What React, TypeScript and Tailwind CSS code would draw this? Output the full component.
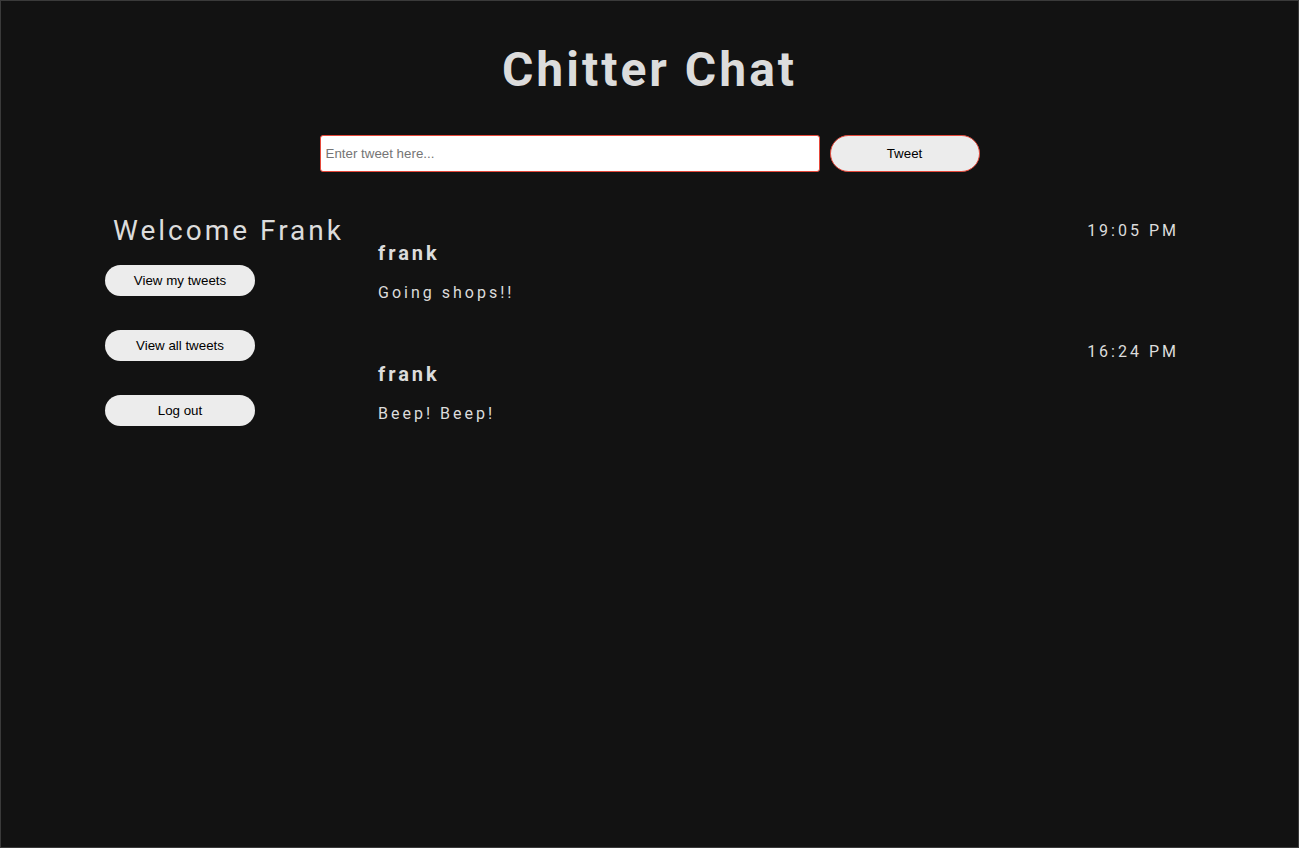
import { useState } from 'react'

const tweets = [
  { id: 1, user: 'frank', text: 'Going shops!!', time: '19:05 PM' },
  { id: 2, user: 'frank', text: 'Beep! Beep!', time: '16:24 PM' },
]

function App() {
  const [draft, setDraft] = useState('')

  return (
    <div className="h-[848px] bg-[#121212] border border-[#3a3a3a] text-[#dcdcdc] font-['Roboto',sans-serif] overflow-hidden">
      <h1 className="pt-[45px] text-center text-[48px] leading-[48px] font-bold tracking-[3px]">
        Chitter Chat
      </h1>

      {/* Tweet input */}
      <div className="mt-[41px] flex justify-center gap-[10px]">
        <input
          type="text"
          value={draft}
          onChange={(e) => setDraft(e.target.value)}
          placeholder="Enter tweet here..."
          className="w-[500px] h-[37px] px-[5px] bg-white text-black border border-[#e5483a] rounded-[3px] font-['Liberation_Sans',Arial,sans-serif] text-[13.33px] placeholder-[#757575] focus:outline-none"
        />
        <button className="w-[150px] h-[37px] rounded-full bg-[#ececec] border border-[#e5483a] text-black font-['Liberation_Sans',Arial,sans-serif] text-[13.33px]">
          Tweet
        </button>
      </div>

      <div className="mt-[43px] flex items-start pl-[104px] pr-[119px]">
        {/* Sidebar */}
        <div className="w-[273px] shrink-0">
          <h2 className="ml-2 text-[28px] leading-[32px] tracking-[3px]">Welcome Frank</h2>
          <div className="mt-[18px] flex flex-col gap-[34px]">
            {['View my tweets', 'View all tweets', 'Log out'].map((label) => (
              <button
                key={label}
                className="w-[150px] h-[31px] rounded-full bg-[#ececec] text-black font-['Liberation_Sans',Arial,sans-serif] text-[13.33px]"
              >
                {label}
              </button>
            ))}
          </div>
        </div>

        {/* Tweets */}
        <div className="flex-1 pt-[6px] flex flex-col gap-[37px]">
          {tweets.map((t) => (
            <div key={t.id}>
              <div className="text-right text-[16px] leading-[20px] tracking-[3px]">{t.time}</div>
              <div className="mt-[2px] text-[20px] leading-[20px] font-bold tracking-[3px]">{t.user}</div>
              <p className="mt-[18px] text-[16px] leading-[24px] tracking-[3px]">{t.text}</p>
            </div>
          ))}
        </div>
      </div>
    </div>
  )
}

export default App
